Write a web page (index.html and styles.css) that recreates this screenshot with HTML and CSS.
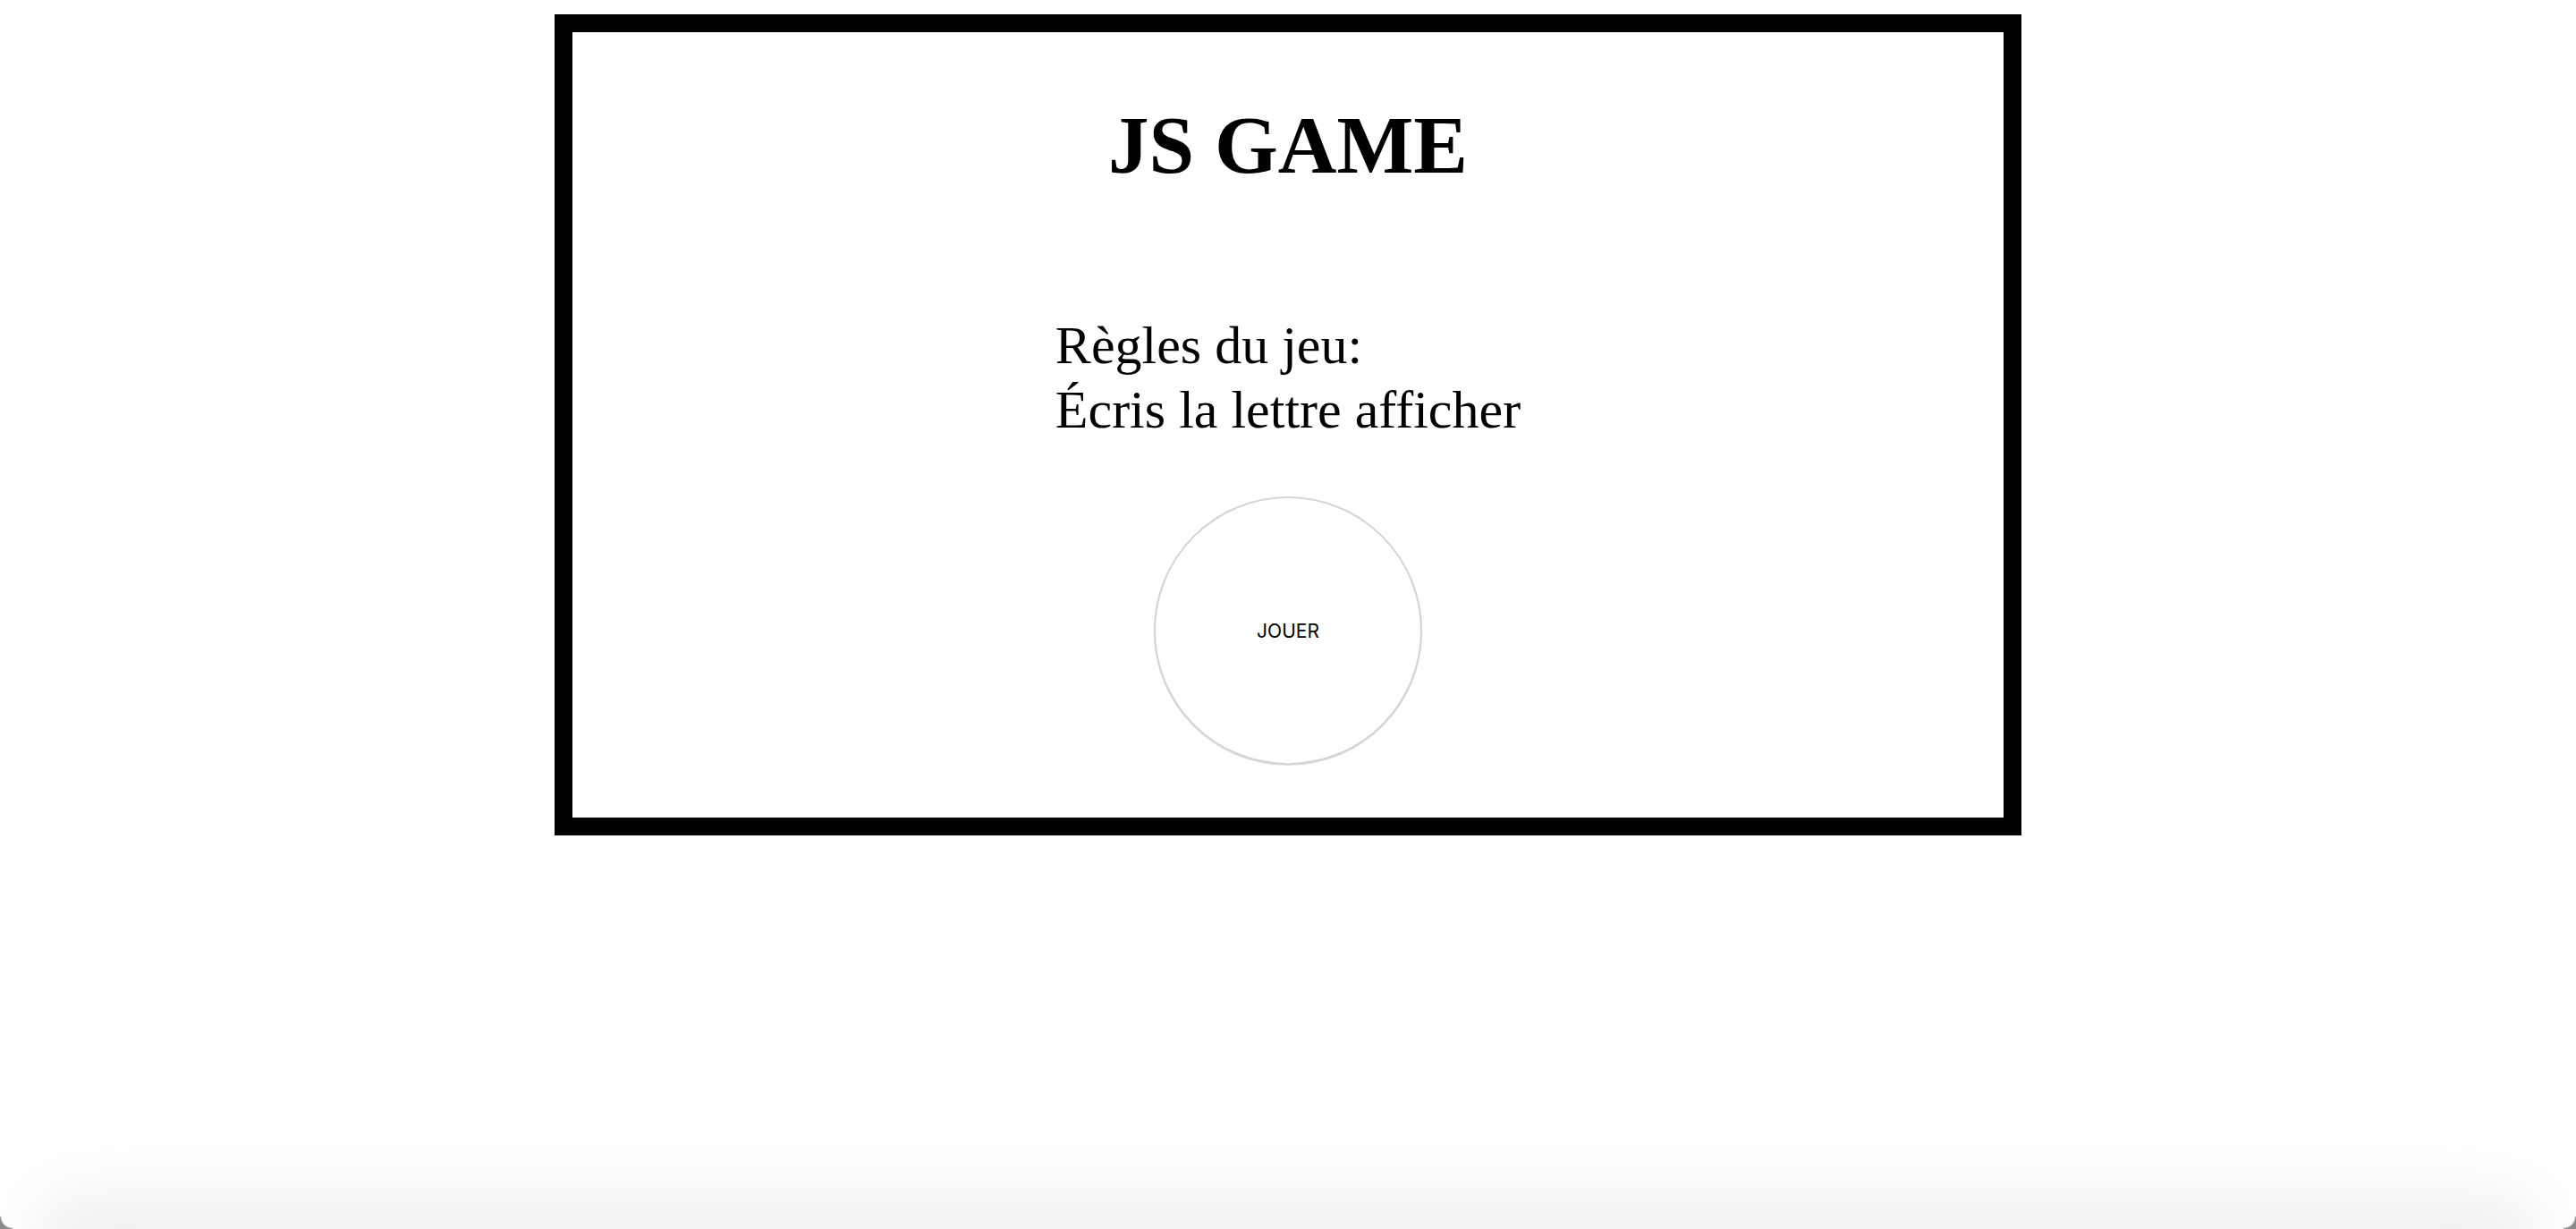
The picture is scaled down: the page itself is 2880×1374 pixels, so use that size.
FILE: index.html
```html
<!DOCTYPE html>
<html lang="fr">
<head>
<meta charset="utf-8">
<title>JS GAME</title>
<link rel="stylesheet" href="styles.css">
</head>
<body>
<main class="frame">
  <h1 class="title">JS GAME</h1>
  <p class="rules">Règles du jeu:<br>Écris la lettre afficher</p>
  <button class="play" type="button">JOUER</button>
</main>
<div class="bottom-shade" aria-hidden="true"></div>
<div class="corner corner-left" aria-hidden="true"></div>
<div class="corner corner-right" aria-hidden="true"></div>
</body>
</html>
```
FILE: styles.css
```css
html, body {
  margin: 0;
  padding: 0;
  background: #ffffff;
}

body {
  padding-top: 16px;
  font-family: "Liberation Serif", "Times New Roman", serif;
  color: #000;
  min-height: 1374px;
  box-sizing: border-box;
  overflow: hidden;
}

.frame {
  box-sizing: border-box;
  width: 1640px;
  height: 918px;
  margin: 0 auto;
  border: 20px solid #000;
  display: flex;
  flex-direction: column;
  align-items: center;
}

.title {
  margin: 73px 0 0;
  font-size: 91px;
  line-height: 107px;
  font-weight: bold;
  text-align: center;
}

.rules {
  margin: 134px 0 0;
  font-size: 60px;
  line-height: 72px;
  text-align: left;
}

.play {
  margin-top: 61px;
  width: 300px;
  height: 300px;
  border-radius: 50%;
  border: 2px solid #d4d4d4;
  box-shadow: 0 1px 1px rgba(0, 0, 0, 0.14);
  background: #fff;
  font-family: "Inter", "Liberation Sans", sans-serif;
  font-size: 21px;
  color: #000;
  padding: 0;
  cursor: pointer;
}

.bottom-shade {
  position: fixed;
  left: 40px;
  right: 40px;
  bottom: -60px;
  height: 100px;
  background: #f0f0f0;
  border-radius: 120px;
  filter: blur(30px);
  pointer-events: none;
}

.corner {
  position: fixed;
  bottom: 0;
  width: 14px;
  height: 14px;
  pointer-events: none;
}

.corner-left {
  left: 0;
  background: radial-gradient(circle at 14px 0, transparent 12px, #8a8a8a 14px);
}

.corner-right {
  right: 0;
  background: radial-gradient(circle at 0 0, transparent 12px, #8a8a8a 14px);
}
```
